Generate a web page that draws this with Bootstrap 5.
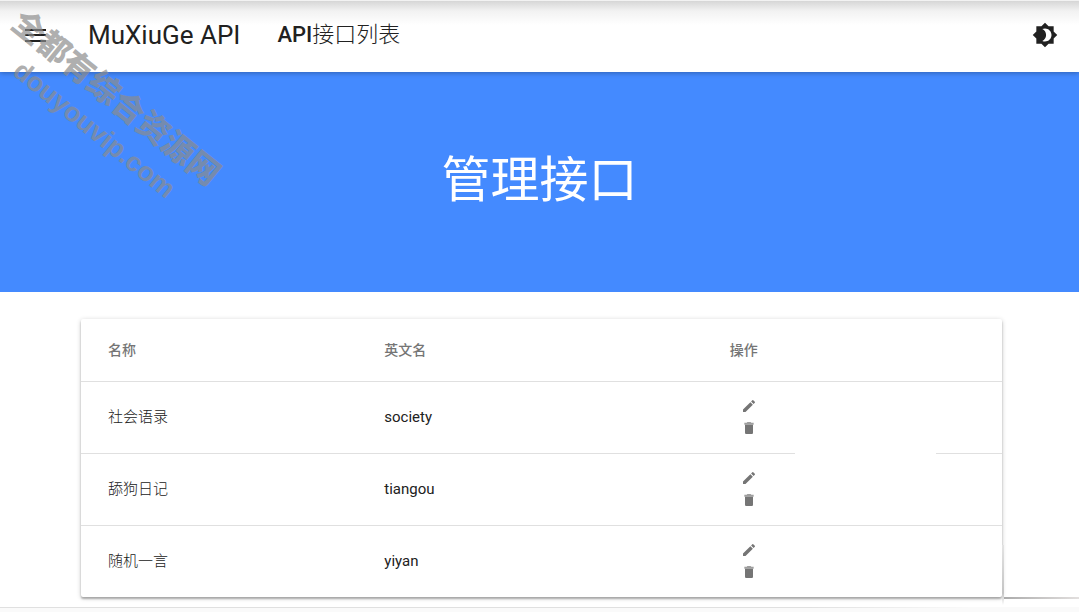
<!DOCTYPE html>
<html lang="zh-CN">
<head>
<meta charset="utf-8">
<meta name="viewport" content="width=device-width, initial-scale=1">
<title>MuXiuGe API</title>
<link href="https://cdn.jsdelivr.net/npm/bootstrap@5.3.0/dist/css/bootstrap.min.css" rel="stylesheet">
<style>
  body { font-family: Roboto, "Noto Sans CJK SC", sans-serif; color: #212121; background: #fff; overflow-x: hidden; }
  .appbar { height: 72px; padding: 0 20px 3px; background: linear-gradient(#d6d6d6, #f2f2f2 10px, #fff 24px); box-shadow: 0 1px 5px rgba(0,0,0,.3); z-index: 2; border-top: 1px solid #f2f2f2; }
  .icon-btn { padding: 0; border: 0; background: none; color: #212121; line-height: 1; display: block; }
  .brand-link { font-size: 26px; line-height: 36px; margin-left: 37px; }
  .list-link { font-size: 22px; line-height: 36px; margin-left: 37px; font-weight: 300; }
  .list-link b { font-weight: 500; }
  .hero { background: #448aff; height: 220px; }
  .hero h1 { font-size: 49px; line-height: 60px; font-weight: 400; padding-bottom: 2px; }
  .panel { margin: 27px 77px 10px 81px; box-shadow: 0 2px 2px rgba(0,0,0,.26), 0 1px 5px rgba(0,0,0,.2); border-radius: 2px; }
  .api-table { table-layout: fixed; font-size: 15px; line-height: 20px; }
  .api-table th, .api-table td { padding: 0 27px; border-bottom: 1px solid #e0e0e0; vertical-align: middle; }
  .api-table th { height: 62px; font-size: 14px; font-weight: 500; color: #757575; }
  .api-table td { height: 72px; color: #212121; }
  .api-table td:first-child { font-weight: 300; }
  .api-table tbody tr:last-child td { border-bottom: 0; }
  .col-name { width: 30%; }
  .col-en { width: 37.5%; }
  .api-table .tools { width: 38px; color: #757575; }
  .tools .icon-btn { color: #757575; height: 22px; width: 38px; }
  .tools svg { display: block; margin: auto; }
  .gap-line::after { content: ""; position: absolute; left: 31%; width: 47%; bottom: -1px; height: 2px; background: #fff; }
  .panel::before { content: ""; position: absolute; left: 100%; bottom: -2px; width: 78px; height: 2px; background: linear-gradient(90deg, #aaa, #e3e0df); }
  .panel::after { content: ""; position: absolute; left: 100%; bottom: -8px; width: 2px; height: 60px; background: linear-gradient(#e3e3e3, #c4c4c4 80%, #fff); }
  .page-end { height: 5px; background: linear-gradient(90deg, #e0e0e0 75%, #fafafa 90%) top / 100% 1px no-repeat #fafafa; }
  .stamp { left: -25px; top: 76px; width: 258px; z-index: 3; transform: rotate(39deg); color: rgba(140,140,140,.7); font: 900 32px/36px "Liberation Sans", "Noto Sans CJK SC", sans-serif; pointer-events: none; white-space: nowrap; }
  .stamp small { font-size: 27px; padding-left: 6px; }
</style>
</head>
<body>
<header class="appbar d-flex align-items-center position-relative">
  <button class="icon-btn" type="button" aria-label="菜单">
    <svg width="31" height="24" viewBox="0 0 31 24"><path fill="currentColor" d="M5 6h21v2H5zm0 5h21v2H5zm0 6h21v2H5z"/></svg>
  </button>
  <a href="#" class="brand-link text-reset text-decoration-none">MuXiuGe API</a>
  <a href="#" class="list-link text-reset text-decoration-none"><b>API</b>接口列表</a>
  <button class="icon-btn ms-auto" type="button" aria-label="切换主题">
    <svg width="28" height="26" viewBox="0 0 24 24"><path fill="currentColor" fill-rule="evenodd" d="M20 8.690V4h-4.690L12 .69 8.690 4H4v4.690L.69 12 4 15.310V20h4.690L12 23.310 15.310 20H20v-4.690L23.310 12 20 8.690zM12 18c-.89 0-1.740-.2-2.500-.55C11.560 16.500 13 14.420 13 12s-1.440-4.500-3.500-5.450C10.260 6.200 11.110 6 12 6c3.310 0 6 2.690 6 6s-2.690 6-6 6z"/></svg>
  </button>
</header>
<div class="stamp position-absolute text-center" aria-hidden="true">全都有综合资源网<br><small>douyouvip.com</small></div>
<section class="hero d-flex align-items-center justify-content-center text-white">
  <h1 class="m-0">管理接口</h1>
</section>
<main class="panel position-relative">
  <table class="api-table w-100">
    <thead>
      <tr><th class="col-name">名称</th><th class="col-en">英文名</th><th>操作</th></tr>
    </thead>
    <tbody>
      <tr><td>社会语录</td><td>society</td><td class="position-relative gap-line"><div class="tools">
        <button class="icon-btn" type="button" aria-label="编辑"><svg width="16" height="16" viewBox="0 0 24 24"><path fill="currentColor" d="M3 17.250V21h3.750L17.810 9.940l-3.750-3.750L3 17.250zM20.710 7.040a1 1 0 0 0 0-1.410l-2.340-2.340a1 1 0 0 0-1.410 0l-1.830 1.830 3.750 3.750 1.830-1.830z"/></svg></button>
        <button class="icon-btn" type="button" aria-label="删除"><svg width="16" height="16" viewBox="0 0 24 24"><path fill="currentColor" d="M6 19c0 1.100.9 2 2 2h8c1.100 0 2-.9 2-2V7H6v12z"/><path fill="currentColor" opacity=".7" d="M19 4h-3.500l-1-1h-5l-1 1H5v3h14V4z"/></svg></button>
      </div></td></tr>
      <tr><td>舔狗日记</td><td>tiangou</td><td><div class="tools">
        <button class="icon-btn" type="button" aria-label="编辑"><svg width="16" height="16" viewBox="0 0 24 24"><path fill="currentColor" d="M3 17.250V21h3.750L17.810 9.940l-3.750-3.750L3 17.250zM20.710 7.040a1 1 0 0 0 0-1.410l-2.340-2.340a1 1 0 0 0-1.410 0l-1.830 1.830 3.750 3.750 1.830-1.830z"/></svg></button>
        <button class="icon-btn" type="button" aria-label="删除"><svg width="16" height="16" viewBox="0 0 24 24"><path fill="currentColor" d="M6 19c0 1.100.9 2 2 2h8c1.100 0 2-.9 2-2V7H6v12z"/><path fill="currentColor" opacity=".7" d="M19 4h-3.500l-1-1h-5l-1 1H5v3h14V4z"/></svg></button>
      </div></td></tr>
      <tr><td>随机一言</td><td>yiyan</td><td><div class="tools">
        <button class="icon-btn" type="button" aria-label="编辑"><svg width="16" height="16" viewBox="0 0 24 24"><path fill="currentColor" d="M3 17.250V21h3.750L17.810 9.940l-3.750-3.750L3 17.250zM20.710 7.040a1 1 0 0 0 0-1.410l-2.340-2.340a1 1 0 0 0-1.410 0l-1.830 1.830 3.750 3.750 1.830-1.830z"/></svg></button>
        <button class="icon-btn" type="button" aria-label="删除"><svg width="16" height="16" viewBox="0 0 24 24"><path fill="currentColor" d="M6 19c0 1.100.9 2 2 2h8c1.100 0 2-.9 2-2V7H6v12z"/><path fill="currentColor" opacity=".7" d="M19 4h-3.500l-1-1h-5l-1 1H5v3h14V4z"/></svg></button>
      </div></td></tr>
    </tbody>
  </table>
</main>
<footer class="page-end"></footer>
<script src="https://cdn.jsdelivr.net/npm/bootstrap@5.3.0/dist/js/bootstrap.bundle.min.js"></script>
</body>
</html>
